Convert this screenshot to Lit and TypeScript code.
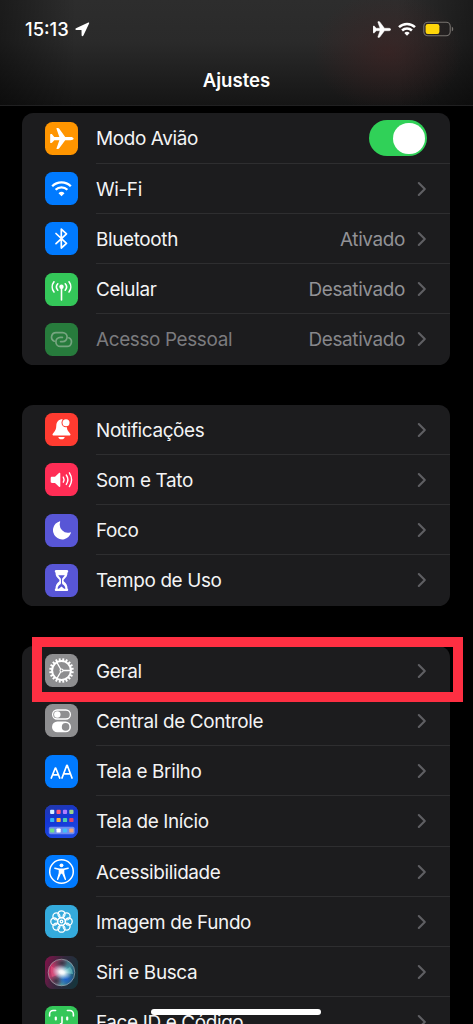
import { LitElement, html, svg, css, nothing } from "lit";
import { customElement, property } from "lit/decorators.js";
import { classMap } from "lit/directives/class-map.js";

interface Item {
  icon: string;
  label: string;
  value?: string;
  toggle?: boolean;
  dim?: boolean;
  marked?: boolean;
}

const GROUPS: Item[][] = [
  [
    { icon: "plane", label: "Modo Avião", toggle: true },
    { icon: "wifi", label: "Wi-Fi" },
    { icon: "bluetooth", label: "Bluetooth", value: "Ativado" },
    { icon: "cell", label: "Celular", value: "Desativado" },
    { icon: "hotspot", label: "Acesso Pessoal", value: "Desativado", dim: true },
  ],
  [
    { icon: "bell", label: "Notificações" },
    { icon: "sound", label: "Som e Tato" },
    { icon: "moon", label: "Foco" },
    { icon: "hourglass", label: "Tempo de Uso" },
  ],
  [
    { icon: "gear", label: "Geral", marked: true },
    { icon: "switches", label: "Central de Controle" },
    { icon: "aa", label: "Tela e Brilho" },
    { icon: "home", label: "Tela de Início" },
    { icon: "access", label: "Acessibilidade" },
    { icon: "flower", label: "Imagem de Fundo" },
    { icon: "siri", label: "Siri e Busca" },
    { icon: "face", label: "Face ID e Código" },
  ],
];

const COLORS: Record<string, string> = {
  plane: "#ff9500",
  wifi: "#007aff",
  bluetooth: "#007aff",
  cell: "#34c759",
  hotspot: "#277b3c",
  bell: "#ff3b30",
  sound: "#ff2d55",
  moon: "#5856d6",
  hourglass: "#5856d6",
  gear: "#8e8e90",
  switches: "#8e8e90",
  aa: "#007aff",
  home: "#1a3fd0",
  access: "#007aff",
  flower: "#34aadc",
  siri: "#25202c",
  face: "#34c759",
};

const PLANE =
  "M27.8 16.5c0 1-1.500 1.500-2.700 1.500h-5.100l-5.500 7.500c-.3.500-.7.700-1.200.700h-.900c-.4 0-.6-.4-.4-.8L14.600 18h-4.700l-1.900 2.300c-.2.300-.5.400-.8.400h-.6c-.3 0-.5-.2-.5-.6v-7.200c0-.4.200-.6.500-.6h.6c.3 0 .6.100.8.400L9.900 15h4.700L12 7.600c-.2-.4 0-.8.400-.8h.9c.5 0 .9.200 1.200.7L20 15h5.100c1.200 0 2.700.5 2.700 1.500z";

const polar = (cx: number, cy: number, r: number, deg: number) => {
  const a = (deg * Math.PI) / 180;
  return [cx + r * Math.cos(a), cy + r * Math.sin(a)];
};

const HOME_DOTS = [
  ["#d7f0ff", "#ff5a78", "#b07cff", "#9bd48a"],
  ["#34b4f5", "#ffb03c", "#4bd0b0", "#e0446c"],
];

const glyph = (name: string) => {
  switch (name) {
    case "plane":
      return svg`<path fill="#fff" transform="translate(-1.400 -1.300) scale(1.080)" d=${PLANE} />`;
    case "wifi":
      return svg`<g fill="none" stroke="#fff" stroke-width="2.300">
        <path d="M7.200 14.200a13.200 13.200 0 0 1 18.600 0" />
        <path d="M10.600 17.700a8.400 8.400 0 0 1 11.800 0" /></g>
        <path fill="#fff" d="M16.500 24.300l-3-3a4.300 4.300 0 0 1 6 0z" />`;
    case "bluetooth":
      return svg`<path fill="none" stroke="#fff" stroke-width="1.700" stroke-linejoin="round" stroke-linecap="round"
        d="M11 11.500l10.500 9.800-5.200 4.700V7.200l5.200 4.700L11 21.700" />`;
    case "cell":
      return svg`<g fill="none" stroke="#fff" stroke-width="1.600" stroke-linecap="round">
        <path d="M16.500 14v13M12.800 10.800a4.800 4.800 0 0 0 0 6.400M20.200 10.800a4.800 4.800 0 0 1 0 6.400M9 8.800a8.300 8.300 0 0 0 0 10.200M24 8.800a8.300 8.300 0 0 1 0 10.200" /></g>
        <circle cx="16.500" cy="13.800" r="2.200" fill="#fff" />`;
    case "hotspot":
      return svg`<g fill="none" stroke="#76a580" stroke-width="1.700" stroke-linecap="round">
        <path d="M9.200 18.200a4.500 4.500 0 0 1 1.800-8.600h6.600a4.500 4.500 0 0 1 0 9h-2" />
        <path d="M23.800 14.800a4.500 4.500 0 0 1-1.800 8.600h-6.600a4.500 4.500 0 0 1 0-9h2" /></g>`;
    case "bell":
      return svg`<path fill="#fff" d="M17.500 6.300c-3.900 0-6 2.600-6.200 6.300-.2 3.400-.6 4.600-2.100 6.300-.9 1-1.700 1.900-1.700 2.700 0 .7.500 1 1.200 1h15.600c.7 0 1.200-.3 1.200-1 0-.8-.8-1.700-1.700-2.700-1.300-1.500-1.800-2.700-2-5.400zM13.300 23.900h6.400c-.2 1.400-1.500 2.400-3.200 2.400s-3-1-3.200-2.400z" />
        <circle cx="21" cy="9.800" r="4.500" fill="#ff3b30" /><circle cx="21" cy="9.800" r="3.500" fill="#fff" />`;
    case "sound":
      return svg`<path fill="#fff" d="M7 13.700h3l4-3.800c.5-.5 1.300-.2 1.300.5v12.800c0 .7-.8 1-1.300.5l-4-3.800H7c-.8 0-1.300-.5-1.300-1.200v-3.800c0-.7.500-1.200 1.300-1.200z" />
        <g fill="none" stroke="#fff" stroke-width="1.400" stroke-linecap="round">
        <path d="M18.300 14.200a5 5 0 0 1 0 5M21.300 12a8.500 8.500 0 0 1 0 9.400M24.400 9.800a13 13 0 0 1 0 13.800" /></g>`;
    case "moon":
      return svg`<path fill="#fff" transform="translate(0 -.7)" d="M14.400 8.100a9.200 9.200 0 1 0 11.500 11.700c.2-.6-.2-1-.8-.7a8.200 8.200 0 0 1-10-10.200c.2-.7-.1-1-.7-.8z" />`;
    case "hourglass":
      return svg`<path fill="#fff" d="M11.200 6h10.600c.9 0 1.400.6 1.400 1.400 0 .6-.3 1-.7 1.200 0 3.300-1.300 4.900-3.300 6.700-.9.800-.9 1.700 0 2.500 2 1.800 3.300 3.400 3.300 6.700.4.200.7.600.7 1.200 0 .8-.5 1.400-1.400 1.400H11.200c-.9 0-1.400-.6-1.400-1.400 0-.6.3-1 .7-1.200 0-3.300 1.300-4.900 3.300-6.700.9-.8.900-1.700 0-2.500-2-1.800-3.300-3.400-3.300-6.700-.4-.2-.7-.6-.7-1.200 0-.8.500-1.400 1.400-1.400z" />
        <path fill="#5856d6" d="M13.200 11.300h6.600c-.5 1-1.200 1.700-2 2.400-.6.600-.8 1.200-.8 2.500v2.200c0 1.200.4 1.700 1.300 2.400 1.100.9 1.900 2 2.100 3.900h-1.200l-2.700-2.200-2.700 2.200h-1.200c.2-1.900 1-3 2.100-3.900.9-.7 1.300-1.200 1.300-2.400v-2.200c0-1.300-.2-1.900-.8-2.500-.8-.7-1.500-1.400-2-2.400z" />`;
    case "gear": {
      const teeth = Array.from({ length: 20 }, (_, i) => {
        const [x1, y1] = polar(16.500, 16.500, 9.600, i * 18 + 9);
        const [x2, y2] = polar(16.500, 16.500, 12.300, i * 18 + 9);
        return `M${x1} ${y1}L${x2} ${y2}`;
      }).join("");
      const spokes = [0, 120, 240]
        .map((d) => {
          const [x1, y1] = polar(16.500, 16.500, 1.500, d);
          const [x2, y2] = polar(16.500, 16.500, 9.300, d);
          return `M${x1} ${y1}L${x2} ${y2}`;
        })
        .join("");
      return svg`<g fill="none" stroke="#fff">
        <path stroke-width="1.900" d=${teeth} /><circle cx="16.500" cy="16.500" r="9.400" stroke-width="2" />
        <path stroke-width="1.300" d=${spokes} /><circle cx="16.500" cy="16.500" r="1.500" stroke-width="1.100" /></g>`;
    }
    case "switches":
      return svg`<rect x="7.600" y="6" width="17.800" height="9" rx="4.500" fill="none" stroke="#fff" stroke-width="1.300" />
        <circle cx="12.300" cy="10.500" r="3.200" fill="#fff" />
        <rect x="7" y="17.500" width="19" height="10.800" rx="5.400" fill="#fff" />
        <circle cx="20.600" cy="22.900" r="3.800" fill="#8e8e90" />`;
    case "aa":
      return svg`<g fill="none" stroke="#fff" stroke-width="1.700" stroke-linecap="round" stroke-linejoin="round">
        <path d="M6.300 23l4-10h.4l4 10M7.700 19.800h5.600" />
        <path d="M17 23l4.800-12.700h.4L27 23M18.700 18.900h6.600" /></g>`;
    case "home":
      return svg`<defs><linearGradient id="wall" x1="0" y1="0" x2="0.300" y2="1"><stop offset="0" stop-color="#2338a8" /><stop offset=".5" stop-color="#1436d6" /><stop offset="1" stop-color="#1d48e0" /></linearGradient></defs>
        <rect width="33" height="33" fill="url(#wall)" />
        <rect x="3.800" y="21.800" width="25.800" height="7.400" rx="1.800" fill="#6f8cf0" />
        ${HOME_DOTS.map((row, r) =>
          row.map((c, i) => svg`<rect x=${5.100 + i * 6.400} y=${4.800 + r * 8.100} width="4.200" height="4.200" rx=".9" fill=${c} />`)
        )}
        ${["#6fe08a", "#ffffff", "#42bdf7", "#f0a27c"].map(
          (c, i) => svg`<rect x=${5.100 + i * 6.400} y="23.400" width="4.200" height="4.200" rx=".9" fill=${c} />`
        )}`;
    case "access":
      return svg`<circle cx="16.500" cy="16.500" r="11.800" fill="none" stroke="#fff" stroke-width="1.500" />
        <circle cx="16.500" cy="10.300" r="1.900" fill="#fff" />
        <path fill="#fff" d="M10 12.500l4.400.9h4.200l4.400-.9c1-.2 1.300 1.100.3 1.400l-4 1.100v3.100l1.700 5.800c.3 1-.9 1.400-1.300.5l-2.600-5.700h-1.200l-2.600 5.700c-.4.900-1.600.5-1.300-.5l1.700-5.800V15l-4-1.100c-1-.3-.7-1.600.3-1.400z" />`;
    case "flower":
      return svg`<g fill="none" stroke="#fff" stroke-width="1.300">
        ${Array.from({ length: 8 }, (_, i) => {
          const [x, y] = polar(16.500, 16.500, 7.200, i * 45);
          return svg`<circle cx=${x} cy=${y} r="3.500" />`;
        })}
        <circle cx="16.500" cy="16.500" r="4" /><circle cx="16.500" cy="16.500" r="1.300" /></g>`;
    case "siri":
      return svg`<defs>
        <linearGradient id="bg" x1="0" y1=".2" x2="1" y2=".5"><stop offset="0" stop-color="#7c1448" /><stop offset=".5" stop-color="#33283c" /><stop offset="1" stop-color="#17343c" /></linearGradient>
        <linearGradient id="orb" x1="0" y1=".3" x2="1" y2=".6"><stop offset="0" stop-color="#c81f58" /><stop offset=".35" stop-color="#a8557a" /><stop offset=".62" stop-color="#4f9fae" /><stop offset="1" stop-color="#1a5070" /></linearGradient>
        <radialGradient id="glow"><stop offset="0" stop-color="#fff" /><stop offset=".25" stop-color="#fff" stop-opacity=".9" /><stop offset="1" stop-color="#c5e6ff" stop-opacity="0" /></radialGradient>
        <radialGradient id="deep"><stop offset="0" stop-color="#1b62d0" /><stop offset="1" stop-color="#1b50c0" stop-opacity="0" /></radialGradient>
        <radialGradient id="shade"><stop offset="0" stop-color="#2b2838" stop-opacity=".85" /><stop offset="1" stop-color="#2b2838" stop-opacity="0" /></radialGradient></defs>
        <rect width="33" height="33" fill="url(#bg)" />
        <circle cx="16.500" cy="16.500" r="13.300" fill="url(#orb)" />
        <ellipse cx="17" cy="7" rx="10" ry="6" fill="url(#shade)" />
        <ellipse cx="11" cy="25" rx="8" ry="6" fill="url(#shade)" />
        <ellipse cx="21" cy="23" rx="8" ry="6.500" fill="url(#deep)" />
        <path d="M16 17L25 11Q28 14 28 18Q22 17 16 17z" fill="#7fe0d8" opacity=".5" />
        <path d="M16 16L6 10Q5 15 7 21Q12 20 16 16z" fill="#ff5c8a" opacity=".45" />
        <ellipse cx="16.800" cy="16.300" rx="10" ry="7" fill="url(#glow)" transform="rotate(20 17 16.500)" />
        <circle cx="16.500" cy="16.500" r="13.300" fill="none" stroke="#a5adb3" stroke-opacity=".75" stroke-width=".9" />`;
    case "face":
      return svg`<g fill="none" stroke="#fff" stroke-width="1.600" stroke-linecap="round">
        <path d="M4.600 10V8a3.500 3.500 0 0 1 3.500-3.500h2.500M22.400 4.500h2.500A3.500 3.500 0 0 1 28.400 8v2M17 11v5.500c0 .9-.5 1.300-1.500 1.300M11.500 22.500q5 4 10 0" />
        <path stroke-width="2.200" d="M10.800 11.500v2M22.200 11.500v2" /></g>`;
    default:
      return nothing;
  }
};

@customElement("settings-row")
class SettingsRow extends LitElement {
  @property({ attribute: false }) item!: Item;
  @property({ type: Boolean }) last = false;

  static styles = css`
    :host { display: block; }
    .row { position: relative; display: flex; align-items: center; height: 50.250px; padding-left: 23px; gap: 18px; }
    .icon { display: block; flex: none; width: 33px; height: 33px; border-radius: 7.500px; }
    .body { display: flex; align-items: center; flex: 1; height: 100%; padding: 1px 23px 0 0; box-sizing: border-box; border-bottom: 1px solid #2e2e30; }
    .last .body { border-bottom-color: transparent; }
    .label, .value { white-space: nowrap; padding-top: 1px; }
    .label { flex: 1; color: #f4f4f5; }
    .dim .label { color: #7b7b7e; }
    .value { color: #929296; margin-right: 12px; }
    .dim .value { color: #86868a; }
    .chevron { display: block; width: 10px; height: 16px; }
    .toggle { display: flex; justify-content: flex-end; width: 58.500px; height: 36px; box-sizing: border-box; padding: 2.300px; border-radius: 18px; background: #30d158; }
    .knob { width: 31.400px; height: 31.400px; border-radius: 50%; background: #fff; }
    .frame { position: absolute; left: 10px; top: -9px; width: 431px; height: 65px; box-sizing: border-box; border: 10px solid #fe2f42; z-index: 3; }
  `;

  render() {
    const { icon, label, value, toggle, dim, marked } = this.item;
    return html`<div class=${classMap({ row: true, dim: !!dim, last: this.last })}>
      <svg class="icon" viewBox="0 0 33 33"><rect width="33" height="33" fill=${COLORS[icon]} />${glyph(icon)}</svg>
      <div class="body">
        <span class="label">${label}</span>
        ${value ? html`<span class="value">${value}</span>` : nothing}
        ${toggle
          ? html`<div class="toggle"><div class="knob"></div></div>`
          : html`<svg class="chevron" viewBox="0 0 10 16"><path d="M1.800 2l6 6-6 6" fill="none" stroke="#5f5f63" stroke-width="2.100" stroke-linecap="round" stroke-linejoin="round" /></svg>`}
      </div>
      ${marked ? html`<div class="frame"></div>` : nothing}
    </div>`;
  }
}

@customElement("app-root")
class AppRoot extends LitElement {
  static styles = css`
    :host { display: block; font-family: Inter, "Liberation Sans", sans-serif; font-size: 18.900px; }
    .screen { position: relative; width: 100%; height: 1024px; overflow: hidden; background: #000; display: flex; flex-direction: column; }
    .header { flex: none; height: 106px; box-sizing: border-box; border-bottom: 1px solid #202021; color: #fff;
      background:
        radial-gradient(ellipse 75px 60px at 388px 52px, rgba(70, 34, 34, 0.5), transparent),
        linear-gradient(90deg, rgba(0, 0, 0, 0.4), transparent 16%, transparent 84%, rgba(0, 0, 0, 0.4)),
        linear-gradient(#2d2d2d, #2a2a2a 40%, #151515); }
    .status { display: flex; align-items: center; height: 58px; padding: 0 19px 0 25px; }
    .time { font-size: 18.400px; font-weight: 550; }
    .arrow { width: 15px; height: 15px; margin-left: 6px; }
    .signals { display: flex; align-items: center; margin-left: auto; gap: 7px; }
    .signals svg { display: block; }
    .title { margin: 0; font-size: 18.600px; font-weight: 600; line-height: 44px; text-align: center; }
    .list { flex: none; display: flex; flex-direction: column; gap: 40px; padding: 7.300px 23px 0 22px; letter-spacing: -0.350px; }
    .card { border-radius: 11.500px; background: #1c1c1e; }
    .indicator { position: absolute; left: 151px; bottom: 9px; width: 170px; height: 6px; border-radius: 3px; background: #fff; z-index: 5; }
  `;

  render() {
    return html`<div class="screen">
      <header class="header">
        <div class="status">
          <span class="time">15:13</span>
          <svg class="arrow" viewBox="0 0 15 15"><path fill="#fff" d="M13.300.600L1 6.300c-1 .5-.8 1.700.3 1.700l5.200.1.100 5.200c0 1.200 1.300 1.400 1.800.3L14.100 1.500c.3-.7-.2-1.200-.8-.9z" /></svg>
          <div class="signals">
            <svg width="18" height="17" viewBox="6 6.500 22 20"><path fill="#fff" stroke="#fff" stroke-width=".6" d=${PLANE} /></svg>
            <svg width="18" height="14" viewBox="0 0 18 14"><g fill="none" stroke="#fff" stroke-width="2.500"><path d="M1 5.200a11.500 11.500 0 0 1 16 0M4.100 8.500a7 7 0 0 1 9.800 0" /></g><path fill="#fff" d="M9 13.800l-2.700-2.700a3.900 3.900 0 0 1 5.400 0z" /></svg>
            <svg width="31" height="16" viewBox="0 0 31 16"><rect x=".8" y="1.300" width="26.400" height="13.400" rx="4" fill="none" stroke="#77736f" stroke-width="1.100" /><rect x="2.600" y="3.100" width="13.800" height="9.800" rx="2.200" fill="#ffd60a" /><path d="M28.800 5.700c1.900.6 1.900 4 0 4.600z" fill="#77736f" /></svg>
          </div>
        </div>
        <h1 class="title">Ajustes</h1>
      </header>
      <main class="list">
        ${GROUPS.map(
          (g) => html`<section class="card">
            ${g.map((item, i) => html`<settings-row .item=${item} .last=${i === g.length - 1}></settings-row>`)}
          </section>`
        )}
      </main>
      <div class="indicator"></div>
    </div>`;
  }
}
